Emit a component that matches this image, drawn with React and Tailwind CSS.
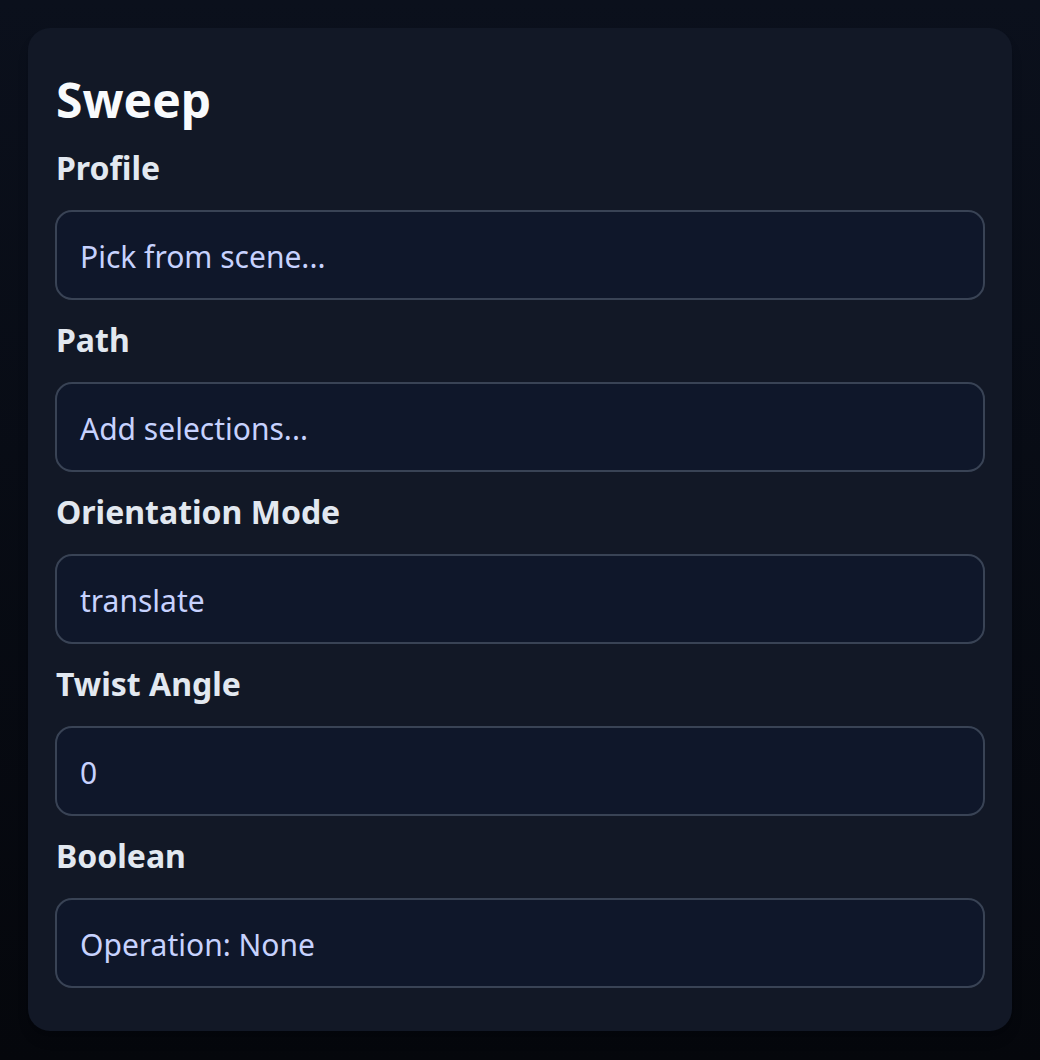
import React from "react";

const fields = [
  { label: "Profile", value: "Pick from scene..." },
  { label: "Path", value: "Add selections..." },
  { label: "Orientation Mode", value: "translate" },
  { label: "Twist Angle", value: "0" },
  { label: "Boolean", value: "Operation: None" },
];

const App = () => {
  return (
    <div className="min-h-screen bg-gradient-to-b from-[#0b101c] to-[#05070c] p-[28px] font-['Noto_Sans',sans-serif]">
      <div className="rounded-[22px] bg-[#121826] px-[28px] pt-[44px] pb-[43px] shadow-lg">
        <h2 className="text-[48px] leading-[56px] font-bold text-[#f8fafc] mb-[22px]">Sweep</h2>
        <div className="flex flex-col gap-[22px]">
          {fields.map((field) => (
            <div key={field.label}>
              <div className="text-[32px] leading-[36px] font-bold text-[#e2e8f0] mb-[24px]">{field.label}</div>
              <div className="-mx-px h-[90px] rounded-[17px] border-2 border-[#394355] bg-[#0f172a] px-[23px] pt-[3px] flex items-center text-[30px] leading-[48px] text-[#c7d2fe]">
                {field.value}
              </div>
            </div>
          ))}
        </div>
      </div>
    </div>
  );
};

export default App;
